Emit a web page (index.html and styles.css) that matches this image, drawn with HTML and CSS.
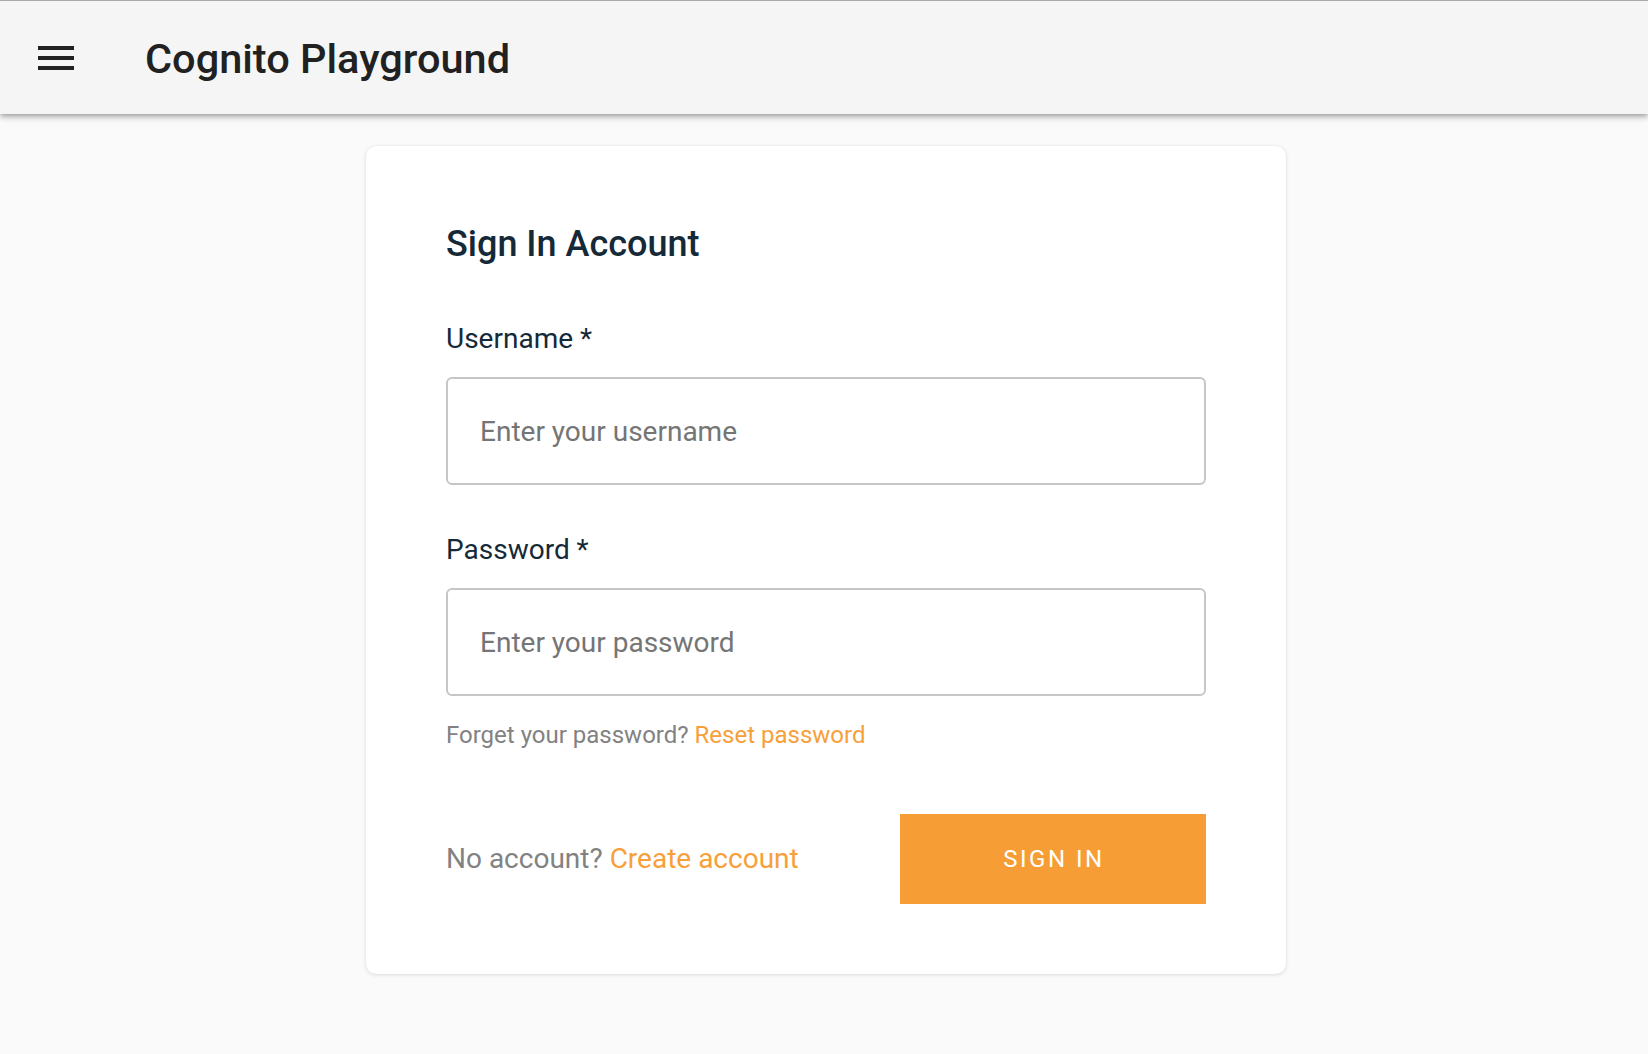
FILE: index.html
```html
<!DOCTYPE html>
<html lang="en">
<head>
<meta charset="utf-8">
<title>Cognito Playground</title>
<link rel="stylesheet" href="styles.css">
</head>
<body>
<header class="appbar">
  <button class="menu-btn" aria-label="Menu">
    <svg width="36" height="24" viewBox="0 0 36 24" aria-hidden="true">
      <rect x="0" y="0" width="36" height="4" fill="#222"/>
      <rect x="0" y="10" width="36" height="4" fill="#222"/>
      <rect x="0" y="20" width="36" height="4" fill="#222"/>
    </svg>
  </button>
  <h1 class="app-title">Cognito Playground</h1>
</header>
<main class="main">
  <section class="card">
    <h2 class="card-title">Sign In Account</h2>
    <label class="field-label" for="username">Username *</label>
    <input class="field-input" id="username" type="text" placeholder="Enter your username">
    <label class="field-label field-label-second" for="password">Password *</label>
    <input class="field-input" id="password" type="password" placeholder="Enter your password">
    <p class="hint">Forget your password? <a class="link" href="#">Reset password</a></p>
    <div class="actions">
      <p class="no-account">No account? <a class="link" href="#">Create account</a></p>
      <button class="signin-btn">SIGN IN</button>
    </div>
  </section>
</main>
</body>
</html>
```

FILE: styles.css
```css
* { box-sizing: border-box; }

html, body {
  margin: 0;
  padding: 0;
}

body {
  background: #fafafa;
  font-family: Roboto, "Liberation Sans", Arial, sans-serif;
  color: #152939;
  min-height: 1054px;
}

.appbar {
  height: 114px;
  border-top: 1px solid #a9a9a9;
  background: #f5f5f5;
  display: flex;
  align-items: center;
  box-shadow: 0 2px 4px -1px rgba(0,0,0,0.2), 0 4px 5px 0 rgba(0,0,0,0.14), 0 1px 10px 0 rgba(0,0,0,0.12);
  position: relative;
  z-index: 1;
}

.menu-btn {
  margin-left: 38px;
  width: 36px;
  height: 24px;
  padding: 0;
  border: 0;
  background: none;
  display: flex;
}

.app-title {
  margin: 2px 0 0 71px;
  font-size: 41.5px;
  line-height: 50px;
  font-weight: 500;
  color: #212121;
}

.main {
  display: flex;
  justify-content: center;
  padding-top: 32px;
}

.card {
  width: 920px;
  margin-left: 4px;
  background: #fff;
  border-radius: 10px;
  box-shadow: 0 1px 4px rgba(0,0,0,0.12), 0 0 1px rgba(0,0,0,0.08);
  padding: 76px 80px 70px 80px;
  display: flex;
  flex-direction: column;
}

.card-title {
  margin: 0;
  font-size: 36px;
  line-height: 44px;
  font-weight: 500;
  color: #152939;
}

.field-label {
  display: block;
  margin-top: 57px;
  font-size: 28px;
  line-height: 32px;
  color: #152939;
}

.field-label-second {
  margin-top: 49px;
}

.field-input {
  display: block;
  margin-top: 22px;
  width: 100%;
  height: 108px;
  border: 2px solid #c6c6c6;
  border-radius: 6px;
  padding: 0 32px;
  font-family: Roboto, "Liberation Sans", Arial, sans-serif;
  font-size: 28px;
  color: #152939;
  background: #fff;
  outline: none;
}

.field-input::placeholder {
  color: #757575;
}

.hint {
  margin: 25px 0 0 0;
  font-size: 24px;
  line-height: 28px;
  color: #828282;
}

.link {
  color: #f7a03a;
  text-decoration: none;
}

.actions {
  margin-top: 65px;
  display: flex;
  align-items: center;
  justify-content: space-between;
}

.no-account {
  margin: 0;
  font-size: 28px;
  line-height: 32px;
  color: #828282;
}

.signin-btn {
  width: 306px;
  height: 90px;
  border: 0;
  background: #f69e35;
  color: #fff;
  font-family: Roboto, "Liberation Sans", Arial, sans-serif;
  font-size: 24px;
  font-weight: 400;
  letter-spacing: 2.5px;
  padding: 0 0 0 2px;
}
```
